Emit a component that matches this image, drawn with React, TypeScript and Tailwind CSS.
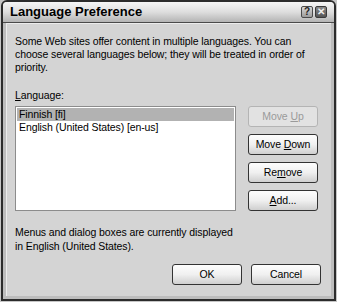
import React from 'react';

const font = { fontFamily: '"Liberation Sans", Arial, sans-serif' };

function DlgButton({ children, disabled, className = '' }: { children: React.ReactNode; disabled?: boolean; className?: string }) {
  return (
    <div
      className={`flex h-[21px] w-[70px] items-center justify-center rounded-[3px] border text-[10.5px] tracking-[-0.1px] leading-none ${
        disabled
          ? 'border-[#b4b4b4] bg-[#e2e2e2] text-[#9a9a9a]'
          : 'border-[#333333] bg-gradient-to-b from-[#fdfdfd] via-[#f0f0f0] to-[#cfcfcf] text-black'
      } ${className}`}
    >
      {children}
    </div>
  );
}

export default function App() {
  return (
    <div className="h-[302px] w-[337px] bg-[#c6c6c6] px-[1px] pb-[1px]" style={font}>
      <div className="flex h-full w-full flex-col overflow-hidden rounded-t-[6px] border-2 border-[#2c2c2c] bg-[#d4d4d4]">
        {/* title bar */}
        <div className="flex h-[21px] shrink-0 items-center justify-between border-b border-[#4a4a4a] bg-gradient-to-b from-[#f6f6f6] via-[#dedede] to-[#b4b4b4] pl-[7px] pr-[7px]">
          <span className="text-[13px] font-bold tracking-[0px] text-black">Language Preference</span>
          <div className="flex gap-[2px]">
            <div className="flex h-[12px] w-[12px] items-center justify-center rounded-[2px] border border-[#4a4a4a] bg-gradient-to-b from-[#d8d8d8] to-[#9c9c9c] text-[10px] font-bold leading-none text-[#222]">
              ?
            </div>
            <div className="flex h-[12px] w-[12px] items-center justify-center rounded-[2px] border border-[#3a3a3a] bg-gradient-to-b from-[#8a8a8a] to-[#555] text-[10px] font-bold leading-none text-[#eee]">
              ✕
            </div>
          </div>
        </div>

        {/* body */}
        <div className="flex flex-1 flex-col border-x-[3px] border-b-[3px] border-[#bdbdbd]">
          <div className="flex flex-1 flex-col border-l border-t border-[#ececec] pl-[8px] pr-[10px] pt-[11px]">
            <p className="whitespace-nowrap text-[10.5px] leading-[13px] tracking-[-0.1px] text-black">
              Some Web sites offer content in multiple languages. You can
              <br />
              choose several languages below; they will be treated in order of
              <br />
              priority.
            </p>

            <p className="mt-[15px] text-[10.5px] leading-[13px] tracking-[-0.1px] text-black">
              <span className="underline">L</span>anguage:
            </p>

            <div className="mt-[4px] flex gap-[12px]">
              <div className="h-[105px] w-[221px] border border-[#8c8c8c] bg-white p-[1px] text-[10.5px] leading-[13px] tracking-[-0.1px]">
                <div className="bg-[#b2b2b2] px-[2px] text-black">Finnish [fi]</div>
                <div className="px-[2px] text-black">English (United States) [en-us]</div>
              </div>
              <div className="flex flex-col gap-[7px]">
                <DlgButton disabled>
                  <span>
                    Move <span className="underline">U</span>p
                  </span>
                </DlgButton>
                <DlgButton>
                  <span>
                    Move <span className="underline">D</span>own
                  </span>
                </DlgButton>
                <DlgButton>
                  <span>
                    Re<span className="underline">m</span>ove
                  </span>
                </DlgButton>
                <DlgButton>
                  <span>
                    <span className="underline">A</span>dd...
                  </span>
                </DlgButton>
              </div>
            </div>

            <p className="mt-[14px] whitespace-nowrap text-[10.5px] leading-[14px] tracking-[-0.1px] text-black">
              Menus and dialog boxes are currently displayed
              <br />
              in English (United States).
            </p>

            <div className="mt-[11px] flex justify-end gap-[9px]">
              <DlgButton>OK</DlgButton>
              <DlgButton>Cancel</DlgButton>
            </div>
          </div>
        </div>
      </div>
    </div>
  );
}
